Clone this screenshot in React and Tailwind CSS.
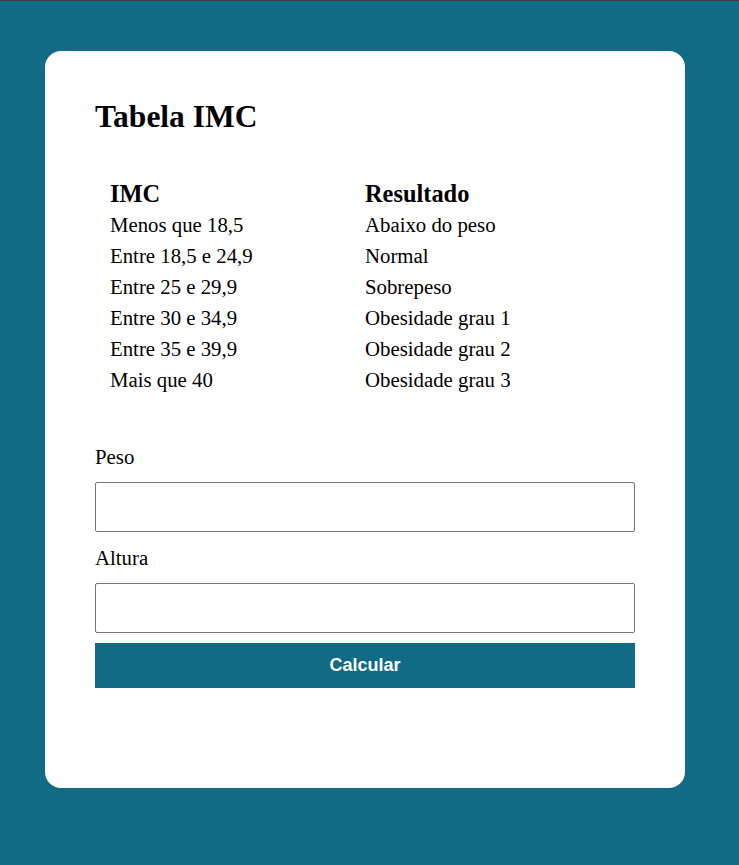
export default function App() {
  const rows = [
    ["Menos que 18,5", "Abaixo do peso"],
    ["Entre 18,5 e 24,9", "Normal"],
    ["Entre 25 e 29,9", "Sobrepeso"],
    ["Entre 30 e 34,9", "Obesidade grau 1"],
    ["Entre 35 e 39,9", "Obesidade grau 2"],
    ["Mais que 40", "Obesidade grau 3"],
  ];
  return (
    <div className="min-h-[865px] bg-[#116b85] border-t border-[#3c4043] pt-[50px] pb-[77px]" style={{ fontFamily: '"Liberation Serif", serif' }}>
      <div className="ml-[45px] w-[640px] bg-white rounded-[16px] px-[50px] pt-[47px] pb-[100px] text-black">
        <h1 className="text-[31.5px] leading-[37px] font-bold">Tabela IMC</h1>
        <div className="mt-[42.5px] pl-[15px]">
          <div className="grid grid-cols-[255px_1fr] h-[31px] text-[24.4px] leading-[31px] font-bold">
            <div>IMC</div>
            <div>Resultado</div>
          </div>
          {rows.map(([a, b]) => (
            <div key={a} className="grid grid-cols-[255px_1fr] h-[31px] text-[20.8px] leading-[31px]">
              <div>{a}</div>
              <div>{b}</div>
            </div>
          ))}
        </div>
        <div className="mt-[50.5px] flex flex-col">
          <label className="text-[20.8px] leading-[24px]">Peso</label>
          <input className="mt-[13px] h-[50px] w-full border border-[#767676] rounded-[2px] outline-none" />
          <label className="mt-[14px] text-[20.8px] leading-[24px]">Altura</label>
          <input className="mt-[13px] h-[50px] w-full border border-[#767676] rounded-[2px] outline-none" />
          <button className="mt-[10px] h-[45px] w-full bg-[#116b85] text-white text-[18px] font-bold" style={{ fontFamily: '"Liberation Sans", Arial, sans-serif' }}>
            Calcular
          </button>
        </div>
      </div>
    </div>
  );
}
